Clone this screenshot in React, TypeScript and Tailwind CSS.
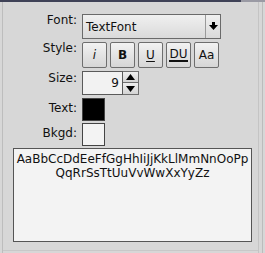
import React from "react";

const font = { fontFamily: '"DejaVu Sans", sans-serif' };

function Btn({ children, className = "" }: { children: React.ReactNode; className?: string }) {
  return (
    <div
      className={
        "flex h-[26px] w-[25px] items-center justify-center rounded-[2px] border border-[#6e6e6e] bg-gradient-to-b from-[#f2f2f2] to-[#d6d6d6] text-[12px] text-[#111] " +
        className
      }
    >
      {children}
    </div>
  );
}

export default function App() {
  return (
    <div
      className="relative h-[253px] w-[265px] overflow-hidden bg-[#d7d7d7] text-[12px] leading-[14px] text-[#111]"
      style={font}
    >
      {/* frame */}
      <div className="absolute left-0 top-0 h-[2px] w-[241px] bg-[#3f4257]" />
      <div className="absolute left-[241px] top-0 h-[2px] w-[24px] bg-[#9a9aa4]" />
      <div className="absolute left-[2px] top-[2px] h-[251px] w-px bg-[#bdbdbd]" />
      <div className="absolute left-[258px] top-[2px] h-[251px] w-px bg-[#c4c4c4]" />
      <div className="absolute left-[262px] top-[2px] h-[251px] w-px bg-[#bcbcbc]" />
      <div className="absolute left-[3px] top-[250px] h-px w-[255px] bg-[#c8c8c8]" />

      <div className="flex flex-col pt-[14px]">
        {/* Font */}
        <div className="flex h-[25px] items-start">
          <div className="mt-[-1px] w-[77px] text-right">Font:</div>
          <div className="ml-[5px] flex h-[25px] w-[139px] items-stretch border border-[#6a6a6a] bg-gradient-to-b from-[#f0f0f0] to-[#dadada]">
            <div className="flex flex-1 items-center pl-[3px] text-[12px]">TextFont</div>
            <div className="flex w-[15px] items-center justify-center border-l border-[#9a9a9a]">
              <svg width="9" height="9" viewBox="0 0 9 9">
                <rect x="3" y="0" width="3" height="3" fill="#000" />
                <polygon points="0,3 9,3 4.5,8" fill="#000" />
              </svg>
            </div>
          </div>
        </div>

        {/* Style */}
        <div className="mt-[3px] flex h-[26px] items-start">
          <div className="mt-[-1px] w-[77px] text-right">Style:</div>
          <div className="ml-[5px] flex gap-[3px]">
            <Btn className="font-light italic">i</Btn>
            <Btn className="font-bold">B</Btn>
            <Btn>
              <span className="underline underline-offset-2">U</span>
            </Btn>
            <Btn>
              <span className="border-b-2 border-[#111] leading-[12px]">DU</span>
            </Btn>
            <Btn>Aa</Btn>
          </div>
        </div>

        {/* Size */}
        <div className="mt-[3px] flex h-[24px] items-start">
          <div className="w-[77px] text-right">Size:</div>
          <div className="ml-[5px] flex h-[24px]">
            <div className="flex w-[41px] items-center justify-end border border-[#5a5a5a] bg-[#f2f2f2] pr-[3px]">
              9
            </div>
            <div className="flex w-[16px] flex-col">
              <div className="flex h-[12px] items-center justify-center border border-l-0 border-[#6e6e6e] bg-gradient-to-b from-[#eeeeee] to-[#d4d4d4]">
                <svg width="9" height="6" viewBox="0 0 9 6">
                  <polygon points="0,6 9,6 4.5,0" fill="#000" />
                </svg>
              </div>
              <div className="flex h-[12px] items-center justify-center border border-l-0 border-t-0 border-[#6e6e6e] bg-gradient-to-b from-[#eeeeee] to-[#d4d4d4]">
                <svg width="9" height="6" viewBox="0 0 9 6">
                  <polygon points="0,0 9,0 4.5,6" fill="#000" />
                </svg>
              </div>
            </div>
          </div>
        </div>

        {/* Text */}
        <div className="mt-[3px] flex h-[23px] items-start">
          <div className="mt-[3px] w-[77px] text-right">Text:</div>
          <div className="ml-[5px] h-[23px] w-[23px] border border-[#444] bg-black" />
        </div>

        {/* Bkgd */}
        <div className="mt-[2px] flex h-[23px] items-start">
          <div className="mt-[3px] w-[77px] text-right">Bkgd:</div>
          <div className="ml-[5px] h-[23px] w-[23px] border border-[#444] bg-[#f3f3f3]" />
        </div>

        {/* Preview */}
        <div className="ml-[13px] mt-[2px] flex h-[94px] w-[239px] flex-col items-center border border-[#555] bg-[#f3f3f3] pt-[3px] leading-[14px]">
          <div>AaBbCcDdEeFfGgHhIiJjKkLlMmNnOoPp</div>
          <div>QqRrSsTtUuVvWwXxYyZz</div>
        </div>
      </div>
    </div>
  );
}
